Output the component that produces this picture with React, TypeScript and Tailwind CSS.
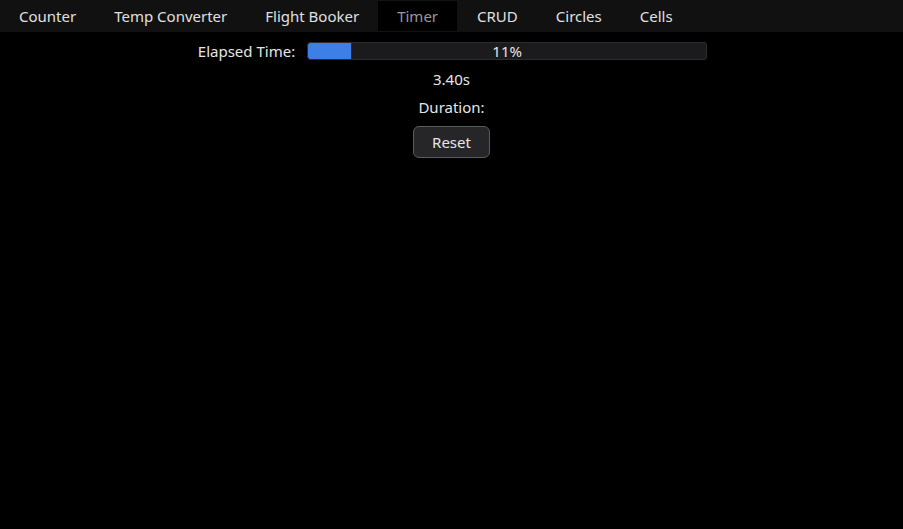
import React from "react";

const tabs = ["Counter", "Temp Converter", "Flight Booker", "Timer", "CRUD", "Circles", "Cells"];

export default function App() {
  return (
    <div className="w-[903px] h-[529px] bg-black text-[#e6e6e6] text-[15px] leading-[20px] overflow-hidden" style={{ fontFamily: '"Noto Sans", "Open Sans", sans-serif' }}>
      <div className="h-[32px] bg-[#111111] flex items-stretch py-[1px]">
        {tabs.map((t) => (
          <div
            key={t}
            className={
              t === "Timer"
                ? "px-[19px] mr-[1px] flex items-center bg-black text-[#9a9a9a]"
                : "px-[19px] flex items-center text-[#e0e0e0]"
            }
          >
            {t}
          </div>
        ))}
      </div>
      <div className="flex flex-col items-center">
        <div className="flex items-center mt-[10px] h-[18px] translate-x-[1px]">
          <span className="mr-[12px]">Elapsed Time:</span>
          <div className="relative w-[400px] h-[18px] rounded-[3px] bg-[#1b1b1d] border border-[#2c2c2e] overflow-hidden">
            <div className="h-full w-[44px] bg-[#3d7fe6] rounded-l-[2px] border-r border-[#2a2a2a]" />
            <div className="absolute inset-0 flex items-center justify-center text-[#e6e6e6] leading-none">11%</div>
          </div>
        </div>
        <div className="mt-[9px]">3.40s</div>
        <div className="mt-[8px]">Duration:</div>
        <button className="mt-[9px] w-[77px] h-[32px] rounded-[6px] bg-[#262629] border border-[#5a5a5a] text-[#e6e6e6]">
          Reset
        </button>
      </div>
    </div>
  );
}
